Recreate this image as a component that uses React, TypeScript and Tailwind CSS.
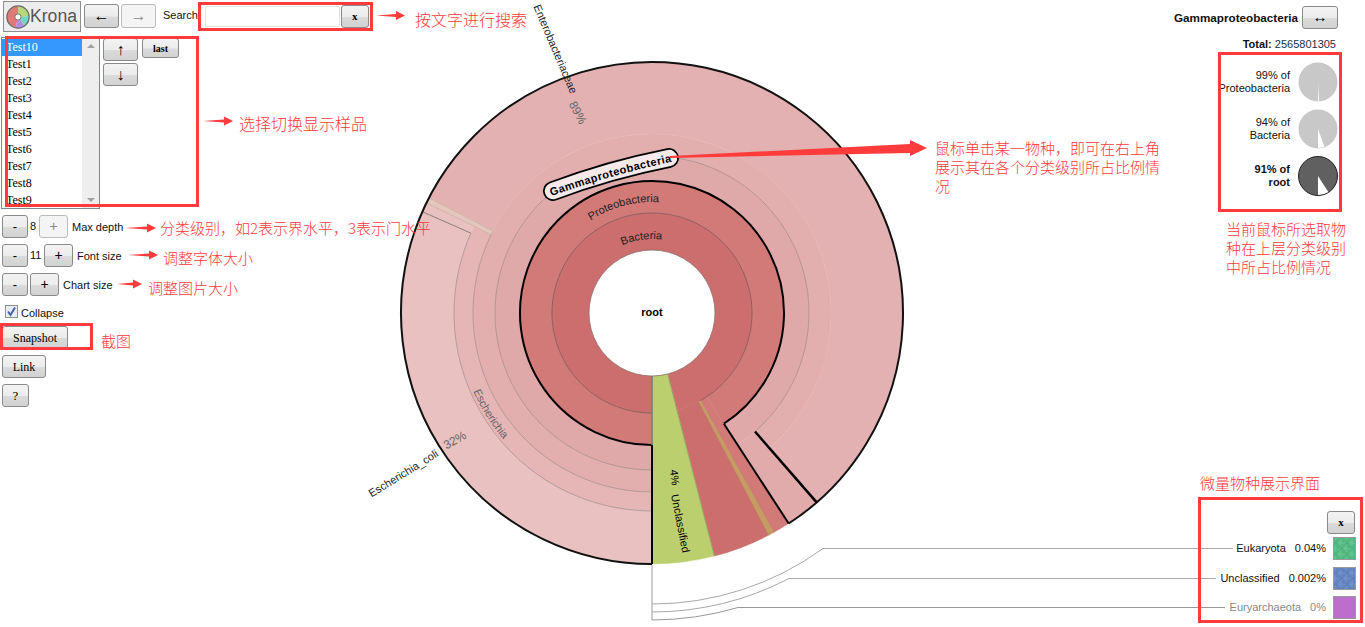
import type { ReactNode } from "react";

const CX = 652;
const CY = 313;

// angle is in degrees from straight down, growing clockwise on screen
function pt(r: number, a: number, cx = CX, cy = CY) {
  const t = (a * Math.PI) / 180;
  return `${(cx - r * Math.sin(t)).toFixed(2)} ${(cy + r * Math.cos(t)).toFixed(2)}`;
}

function arc(r: number, a: number, b: number, cx = CX, cy = CY) {
  const large = Math.abs(b - a) > 180 ? 1 : 0;
  const sweep = b > a ? 1 : 0;
  return `M${pt(r, a, cx, cy)} A${r} ${r} 0 ${large} ${sweep} ${pt(r, b, cx, cy)}`;
}

function wedge(r0: number, r1: number, a: number, b: number, cx = CX, cy = CY) {
  const large = Math.abs(b - a) > 180 ? 1 : 0;
  return `M${pt(r0, a, cx, cy)} L${pt(r1, a, cx, cy)} A${r1} ${r1} 0 ${large} 1 ${pt(r1, b, cx, cy)} L${pt(r0, b, cx, cy)} A${r0} ${r0} 0 ${large} 0 ${pt(r0, a, cx, cy)}Z`;
}

const segments = [
  { r0: 63, r1: 100, a: 0, b: 345.6, fill: "#cc6e6e" },
  { r0: 100, r1: 132, a: 0, b: 327, fill: "#d17a78" },
  { r0: 100, r1: 251, a: 327, b: 331, fill: "#d17a78" },
  { r0: 100, r1: 251, a: 332, b: 345.6, fill: "#cc6e6e" },
  { r0: 63, r1: 251, a: 345.6, b: 360, fill: "#bccf6f" },
  { r0: 132, r1: 157, a: 0, b: 327, fill: "#dfa9a9" },
  { r0: 157, r1: 251, a: 319, b: 327, fill: "#e2abab" },
  { r0: 157, r1: 179, a: 0, b: 319, fill: "#e2aeae" },
  { r0: 179, r1: 251, a: 117.3, b: 319, fill: "#e3b1b1" },
  { r0: 179, r1: 198, a: 0, b: 116, fill: "#e6b5b5" },
  { r0: 198, r1: 251, a: 0, b: 116, fill: "#e9c1c1" },
  { r0: 179, r1: 251, a: 116, b: 117.3, fill: "#e6c5bc" },
];

function Chart() {
  return (
    <svg
      className="absolute left-0 top-0 h-[627px] w-[1365px] font-['Liberation_Sans',sans-serif]"
      viewBox="0 0 1365 627"
    >
      {segments.map((s) => (
        <path
          key={`${s.r0}-${s.a}`}
          d={wedge(s.r0, s.r1, s.a, s.b)}
          fill={s.fill}
          stroke={s.fill}
          strokeWidth="0.4"
        />
      ))}
      <path d={wedge(100, 251, 330.9, 332.3)} fill="#c69c64" stroke="#b08c62" strokeWidth="0.4" />
      <path d={wedge(179, 251, 116, 117.3)} fill="none" stroke="#c2aba2" strokeWidth="0.7" />

      {/* thin level rings */}
      <path d={arc(100, 0, 331)} fill="none" stroke="#7d5555" strokeWidth="0.8" />
      <path d={arc(157, 0, 319)} fill="none" stroke="#a88c8c" strokeWidth="0.8" />
      <path d={arc(179, 0, 116)} fill="none" stroke="#a98f8f" strokeWidth="0.8" />
      <path d={arc(198, 0, 113.8)} fill="none" stroke="#a69090" strokeWidth="0.8" />
      <path d={`M${pt(198, 113.8)} L${pt(251, 113.8)}`} stroke="#8f7f7f" strokeWidth="1" />
      <path d={arc(63, 0, 360 - 0.01)} fill="#fff" stroke="#8a6a6a" strokeWidth="0.8" />
      <path d={`M${pt(63, 345.6)} L${pt(251, 345.6)}`} stroke="#8d9a5c" strokeWidth="0.8" />

      {/* selected node outline */}
      <path d={arc(132, 0, 327)} fill="none" stroke="#000" strokeWidth="2" />
      <path d={arc(251, 0, 327)} fill="none" stroke="#111" strokeWidth="2" />
      <path d={`M${pt(132, 0)} L${pt(251, 0)}`} stroke="#000" strokeWidth="2" />
      <path d={`M${pt(132, 327)} L${pt(251, 327)}`} stroke="#000" strokeWidth="2" />
      <path d={`M${pt(157, 319)} L${pt(251, 319)}`} stroke="#000" strokeWidth="2.5" />
      <path d={`M${pt(63, 0)} L${pt(132, 0)}`} stroke="#77777f" strokeWidth="1.5" />

      {/* lines to the small-item keys */}
      <g fill="none" stroke="#a8a8a8" strokeWidth="1">
        <path d="M652 565 V620" stroke="#999" />
        <path d="M652 604 A291 291 0 0 0 823 548.5 H1233" />
        <path d="M652 612 A299 299 0 0 0 789 578.5 H1216" />
        <path d="M652 620 A307 307 0 0 0 738 607.5 H1225" stroke="#999" />
      </g>

      <defs>
        <path id="proteo-path" d={arc(111, 130, 200)} />
        <path id="bacteria-path" d={arc(74, 130, 214)} />
        <path id="escherichia-path" d={arc(195, 76, 40)} />
        <path id="gamma-path" d="M533 198.5 Q609 170 689 154" />
      </defs>

      <g fontSize="11" fill="#222">
        <text fontWeight="700" textAnchor="middle" x="652" y="316" fill="#000">
          root
        </text>
        <text textAnchor="middle">
          <textPath href="#bacteria-path" startOffset="50%">Bacteria</textPath>
        </text>
        <text textAnchor="middle">
          <textPath href="#proteo-path" startOffset="50%">Proteobacteria</textPath>
        </text>
        <text textAnchor="middle" fill="#666">
          <textPath href="#escherichia-path" startOffset="50%">Escherichia</textPath>
        </text>
        <text transform="translate(537 5) rotate(67)" y="4">Enterobacteriaceae</text>
        <text transform="translate(572 102) rotate(62)" y="4" fontSize="12" fill="#666">89%</text>
        <text transform="translate(370 495) rotate(-31.7)" y="3">Escherichia_coli</text>
        <text transform="translate(445 447) rotate(-30)" y="3" fontSize="12" fill="#666">32%</text>
        <text transform="translate(670 470) rotate(83)" y="0" fill="#000">4%</text>
        <text transform="translate(671 495) rotate(79)" y="0" fill="#000">Unclassified</text>
      </g>

      {/* focused label */}
      <path d="M553 191 Q609 170 669 158" fill="none" stroke="#000" strokeWidth="20" strokeLinecap="round" />
      <path d="M553 191 Q609 170 669 158" fill="none" stroke="#f6e9e9" strokeWidth="16.5" strokeLinecap="round" />
      <text fontSize="11" fontWeight="700" textAnchor="middle" letterSpacing="0.5" dy="4" fill="#000">
        <textPath href="#gamma-path" startOffset="50%">Gammaproteobacteria</textPath>
      </text>
    </svg>
  );
}

function Btn({ className, muted, children }: { className: string; muted?: boolean; children: ReactNode }) {
  return (
    <button
      className={
        muted
          ? `flex shrink-0 items-center justify-center rounded-[3px] border border-[#bbbbbb] bg-[#f4f4f4] text-[#888] ${className}`
          : `flex shrink-0 items-center justify-center rounded-[3px] border border-[#8a8a8a] bg-[linear-gradient(#f3f3f3,#ececec_50%,#dadada_55%,#d2d2d2)] text-black ${className}`
      }
    >
      {children}
    </button>
  );
}

function KronaLogo() {
  const c = 13.5;
  return (
    <svg width="24" height="24" viewBox="0 0 27 27" className="shrink-0">
      <path d={wedge(3.5, 12.5, 12, 180, c, c)} fill="#e07a76" />
      <path d={wedge(3.5, 12.5, 180, 265, c, c)} fill="#b4d77a" />
      <path d={wedge(3.5, 12.5, 265, 325, c, c)} fill="#79d3c4" />
      <path d={wedge(3.5, 12.5, 325, 372, c, c)} fill="#b78ae2" />
      <circle cx={c} cy={c} r="12.5" fill="none" stroke="#6b6b6b" strokeWidth="1.4" />
      <circle cx={c} cy={c} r="3.5" fill="#fff" stroke="#6b6b6b" />
    </svg>
  );
}

const samples = ["Test10", "Test1", "Test2", "Test3", "Test4", "Test5", "Test6", "Test7", "Test8", "Test9"];

function SampleList() {
  return (
    <div className="-ml-px flex h-[172px] w-[99px] shrink-0 overflow-hidden border border-[#808890] font-['Liberation_Serif',serif] text-[12px]">
      <div className="w-[81px]">
        {samples.map((s, i) => (
          <div
            key={s}
            className={
              i === 0
                ? "mt-px flex h-[17px] items-center bg-[#3399ff] pb-[2px] pl-[4px] text-white"
                : "flex h-[17px] items-center pb-[2px] pl-[4px] text-black"
            }
          >
            {s}
          </div>
        ))}
      </div>
      <div className="flex w-[17px] flex-col items-center justify-between bg-[#eeeeee] py-[6px]">
        <div className="h-0 w-0 border-x-[4px] border-b-[4px] border-x-transparent border-b-[#a0a0a0]" />
        <div className="h-0 w-0 border-x-[4px] border-t-[4px] border-x-transparent border-t-[#a0a0a0]" />
      </div>
    </div>
  );
}

function Sidebar() {
  return (
    <div className="flex w-[400px] flex-col pl-[2px] pt-px font-['Liberation_Sans',sans-serif] text-[11px] text-[#111]">
      <div className="flex items-start">
        <div className="ml-px flex h-[31px] w-[78px] items-center border border-[#8f8f8f] bg-[#ededed] pl-[2px]">
          <KronaLogo />
          <span className="text-[17.6px] leading-none text-[#555]">Krona</span>
        </div>
        <Btn className="ml-[3px] mt-[3px] h-[24px] w-[35px] text-[16px]">←</Btn>
        <Btn muted className="ml-[2px] mt-[3px] h-[24px] w-[35px] text-[16px]">
          →
        </Btn>
        <span className="ml-[7px] mt-[7px] leading-[14px]">Search</span>
        <div className="ml-[7px] mt-[5px] h-[21px] w-[135px] rounded-[2px] border border-[#dde3ea] bg-white" />
        <Btn className="ml-px mt-[4px] h-[23px] w-[28px] font-['Liberation_Serif',serif] text-[11px] font-bold">x</Btn>
      </div>

      <div className="mt-[5px] flex items-start">
        <SampleList />
        <div className="ml-[3px] mt-px flex flex-col gap-[2px]">
          <Btn className="h-[23px] w-[35px] text-[16px]">↑</Btn>
          <Btn className="h-[23px] w-[35px] text-[16px]">↓</Btn>
        </div>
        <Btn className="ml-[4px] mt-px h-[20px] w-[37px] font-['Liberation_Serif',serif] text-[10px] font-bold">last</Btn>
      </div>

      <div className="mt-[6px] flex h-[23px] items-center">
        <Btn className="h-full w-[26px] text-[13px]">-</Btn>
        <span className="ml-[2px] w-[9px]">8</span>
        <Btn muted className="h-full w-[29px] text-[14px]">+</Btn>
        <span className="ml-[4px] translate-y-px">Max depth</span>
      </div>
      <div className="mt-[6px] flex h-[23px] items-center">
        <Btn className="h-full w-[26px] text-[13px]">-</Btn>
        <span className="ml-[2px] w-[14px]">11</span>
        <Btn className="h-full w-[29px] text-[14px]">+</Btn>
        <span className="ml-[4px] translate-y-px">Font size</span>
      </div>
      <div className="mt-[6px] flex h-[23px] items-center">
        <Btn className="h-full w-[26px] text-[13px]">-</Btn>
        <Btn className="ml-[2px] h-full w-[29px] text-[14px]">+</Btn>
        <span className="ml-[4px] translate-y-px">Chart size</span>
      </div>

      <div className="ml-[3px] mt-[9px] flex h-[13px] items-center gap-[3px]">
        <div className="flex h-[13px] w-[13px] items-center justify-center border border-[#8e8f8f] bg-[#e9eef5]">
          <svg width="11" height="11" viewBox="0 0 11 11">
            <path d="M2 5.5 L4.5 9 L9 1.5" fill="none" stroke="#4a60a8" strokeWidth="2" />
          </svg>
        </div>
        <span className="translate-y-[2px]">Collapse</span>
      </div>

      <Btn className="mt-[8px] h-[23px] w-[66px] font-['Liberation_Serif',serif] text-[12px]">Snapshot</Btn>
      <Btn className="mt-[6px] h-[23px] w-[44px] font-['Liberation_Serif',serif] text-[12px]">Link</Btn>
      <Btn className="mt-[6px] h-[23px] w-[27px] font-['Liberation_Serif',serif] text-[13px]">?</Btn>
    </div>
  );
}

const pies = [
  { top: "99% of", bottom: "Proteobacteria", cut: 3, fill: "#c8c8c8", bold: false },
  { top: "94% of", bottom: "Bacteria", cut: 20, fill: "#c8c8c8", bold: false },
  { top: "91% of", bottom: "root", cut: 33, fill: "#606060", bold: true },
];

function Pie({ cut, fill, bold }: { cut: number; fill: string; bold: boolean }) {
  return (
    <svg width="40" height="40" viewBox="0 0 40 40" className="shrink-0">
      <circle cx="20" cy="20" r="19.5" fill={fill} stroke={bold ? "#222" : "none"} strokeWidth="1" />
      <path d={`M20 20 L${pt(19, 0, 20, 20)} A19 19 0 0 0 ${pt(19, -cut, 20, 20)}Z`} fill="#fff" />
    </svg>
  );
}

function Swatch({ id, fill, dark, plain }: { id: string; fill: string; dark: string; plain?: boolean }) {
  return (
    <svg width="23" height="23" viewBox="0 0 23 23" className="shrink-0">
      <defs>
        <pattern id={id} width="8" height="8" patternUnits="userSpaceOnUse" patternTransform="rotate(45)">
          <path d="M0 2 H8 M0 4 H4 M4 6 V8 M6 0 V8" stroke={dark} strokeWidth="1" fill="none" />
        </pattern>
      </defs>
      <rect x="0.5" y="0.5" width="22" height="22" fill={fill} stroke="#999" />
      {!plain && <rect x="1" y="1" width="21" height="21" fill={`url(#${id})`} />}
    </svg>
  );
}

const keys = [
  { name: "Eukaryota", value: "0.04%", fill: "#5fc58c", dark: "#48a673", muted: false, plain: false },
  { name: "Unclassified", value: "0.002%", fill: "#6e90cc", dark: "#5675ac", muted: false, plain: false },
  { name: "Euryarchaeota", value: "0%", fill: "#bb6ecb", dark: "#bb6ecb", muted: true, plain: true },
];

function Details() {
  return (
    <div className="flex w-[300px] flex-col justify-between font-['Liberation_Sans',sans-serif] text-[11px] text-[#111]">
      <div className="flex flex-col items-end pr-[27px] pt-[6px]">
        <div className="flex items-center gap-[4px]">
          <b className="text-[11.7px] font-bold">Gammaproteobacteria</b>
          <Btn className="h-[23px] w-[36px] text-[15px]">↔</Btn>
        </div>
        <div className="mr-[2px] mt-[8px] leading-[14px]">
          <b>Total:</b> <span className="text-[#1a2f4a]">2565801305</span>
        </div>
        <div className="mt-[11px] flex flex-col gap-[7px]">
          {pies.map((p) => (
            <div key={p.top} className="flex items-center justify-end gap-[8px]">
              <div className={p.bold ? "text-right font-bold leading-[13px]" : "text-right leading-[13px]"}>
                {p.top}
                <br />
                {p.bottom}
              </div>
              <Pie cut={p.cut} fill={p.fill} bold={p.bold} />
            </div>
          ))}
        </div>
      </div>

      <div className="flex flex-col items-end gap-[6px] pb-[8px] pr-[9px]">
        <Btn className="mr-px h-[23px] w-[28px] font-['Liberation_Serif',serif] text-[11px] font-bold">x</Btn>
        <div className="-mt-[3px] flex flex-col gap-[6.5px]">
          {keys.map((k) => (
            <div
              key={k.name}
              className={k.muted ? "flex items-center justify-end text-[#888]" : "flex items-center justify-end"}
            >
              <span>{k.name}</span>
              <span className="ml-[9px] mr-[7px]">{k.value}</span>
              <Swatch id={`key-${k.name}`} fill={k.fill} dark={k.dark} plain={k.plain} />
            </div>
          ))}
        </div>
      </div>
    </div>
  );
}

const arrows = [
  [376, 405, 15.5],
  [203, 233, 121],
  [125, 156, 228],
  [128, 158, 255],
  [117, 142, 284],
];

function Annotations() {
  const note =
    "absolute font-['Noto_Sans_CJK_SC',sans-serif] font-light text-[#ff3b3b] leading-[19px]";
  const box = "absolute border-[3px] border-[#ff3b3b]";
  return (
    <>
      <div className={`${box} left-[198px] top-[2px] h-[29px] w-[175px]`} />
      <div className={`${box} left-[5px] top-[36px] h-[171px] w-[194px]`} />
      <div className={`${box} left-0 top-[323px] h-[27px] w-[93px]`} />
      <div className={`${box} left-[1218px] top-[52px] h-[160px] w-[124px]`} />
      <div className={`${box} left-[1198px] top-[497px] h-[126px] w-[165px]`} />

      <svg className="absolute left-0 top-0 h-[627px] w-[1365px]" viewBox="0 0 1365 627">
        {arrows.map(([x0, x1, y]) => (
          <polygon
            key={y}
            fill="#ff3b3b"
            points={`${x0},${y} ${x1 - 9},${y - 1.5} ${x1 - 9},${y - 4.5} ${x1},${y} ${x1 - 9},${y + 4.5} ${x1 - 9},${y + 1.5}`}
          />
        ))}
        <polygon fill="#ff3b3b" points="670,156 910,144 910,140 927,148 910,156 910,153 670,158" />
      </svg>

      <span className={`${note} left-[415px] top-[10px] whitespace-nowrap text-[16px]`}>按文字进行搜索</span>
      <span className={`${note} left-[239px] top-[114px] whitespace-nowrap text-[16px]`}>选择切换显示样品</span>
      <span className={`${note} left-[160px] top-[218px] whitespace-nowrap text-[15px]`}>
        分类级别，如2表示界水平，3表示门水平
      </span>
      <span className={`${note} left-[163px] top-[248px] whitespace-nowrap text-[15px]`}>调整字体大小</span>
      <span className={`${note} left-[148px] top-[278px] whitespace-nowrap text-[15px]`}>调整图片大小</span>
      <span className={`${note} left-[101px] top-[331px] whitespace-nowrap text-[15px]`}>截图</span>
      <div className={`${note} left-[935px] top-[138px] w-[226px] text-[15px]`}>
        鼠标单击某一物种，即可在右上角展示其在各个分类级别所占比例情况
      </div>
      <div className={`${note} left-[1226px] top-[219px] w-[122px] text-[15px]`}>
        当前鼠标所选取物种在上层分类级别中所占比例情况
      </div>
      <span className={`${note} left-[1200px] top-[473px] whitespace-nowrap text-[15px]`}>微量物种展示界面</span>
    </>
  );
}

export default function App() {
  return (
    <div className="relative flex h-[627px] w-[1365px] justify-between overflow-hidden bg-white">
      <Chart />
      <div className="relative">
        <Sidebar />
      </div>
      <div className="relative flex">
        <Details />
      </div>
      <Annotations />
    </div>
  );
}
